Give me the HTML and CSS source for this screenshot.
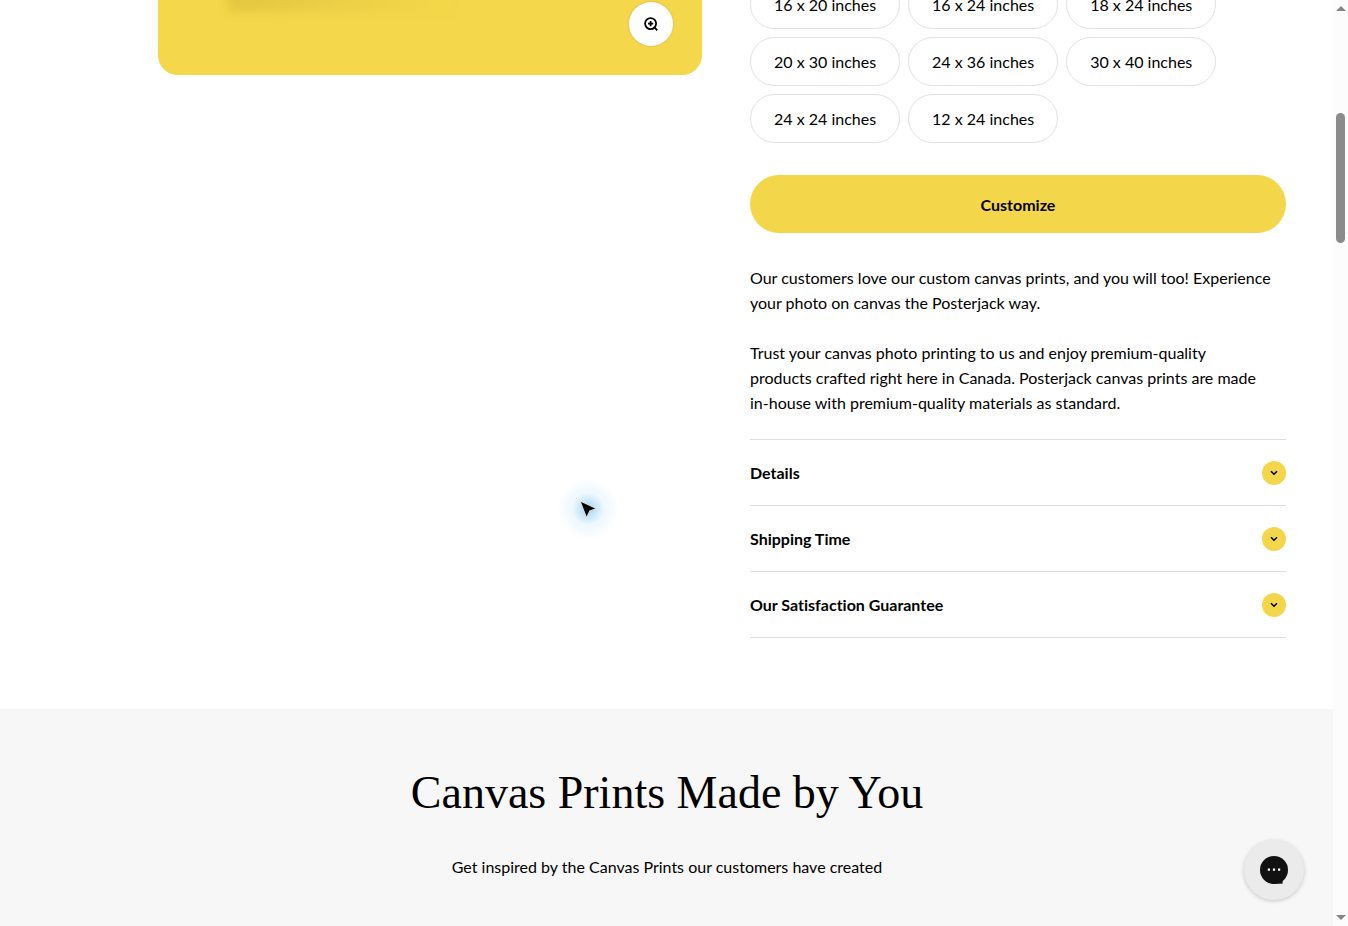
FILE: index.html
```html
<!DOCTYPE html>
<html lang="en">
<head>
    <meta charset="UTF-8">
    <meta name="viewport" content="width=device-width, initial-scale=1.0">
    <title>Canvas Prints</title>
    <link rel="stylesheet" href="styles.css">
</head>
<body>
    <main class="page">
        <section class="product">
            <div class="gallery">
                <div class="gallery-image">
                    <div class="canvas-shadow"></div>
                    <button type="button" class="zoom-button" aria-label="Zoom">
                        <svg width="14" height="14" viewBox="0 0 14 14" fill="none" stroke="#000" stroke-width="1.8">
                            <circle cx="6.6" cy="6.6" r="5.5"/>
                            <path d="M10.4 10.4L13.3 13.3M6.6 4v5.2M4 6.6h5.2"/>
                        </svg>
                    </button>
                </div>
            </div>

            <div class="product-info">
                <form id="sizeForm">
                    <div class="sizes">
                        <div class="size-row">
                            <label class="size"><input type="radio" name="size" value="16x20">16 x 20 inches</label>
                            <label class="size"><input type="radio" name="size" value="16x24">16 x 24 inches</label>
                            <label class="size"><input type="radio" name="size" value="18x24">18 x 24 inches</label>
                        </div>
                        <div class="size-row">
                            <label class="size"><input type="radio" name="size" value="20x30">20 x 30 inches</label>
                            <label class="size"><input type="radio" name="size" value="24x36">24 x 36 inches</label>
                            <label class="size"><input type="radio" name="size" value="30x40">30 x 40 inches</label>
                        </div>
                        <div class="size-row">
                            <label class="size"><input type="radio" name="size" value="24x24">24 x 24 inches</label>
                            <label class="size"><input type="radio" name="size" value="12x24">12 x 24 inches</label>
                        </div>
                    </div>
                    <button type="button" class="customize">Customize</button>
                </form>

                <div class="description">
                    <p>Our customers love our custom canvas prints, and you will too! Experience your photo on canvas the Posterjack way.</p>
                    <p>Trust your canvas photo printing to us and enjoy premium-quality<br>products crafted right here in Canada. Posterjack canvas prints are made <span class="nowrap">in-house</span> with premium-quality materials as standard.</p>
                </div>

                <div class="accordion">
                    <details>
                        <summary>Details
                            <span class="toggle"><svg width="8" height="6" viewBox="0 0 8 6"><path d="M1 1.2L4 4.2L7 1.2" fill="none" stroke="#000" stroke-width="1.6"/></svg></span>
                        </summary>
                    </details>
                    <details>
                        <summary>Shipping Time
                            <span class="toggle"><svg width="8" height="6" viewBox="0 0 8 6"><path d="M1 1.2L4 4.2L7 1.2" fill="none" stroke="#000" stroke-width="1.6"/></svg></span>
                        </summary>
                    </details>
                    <details>
                        <summary>Our Satisfaction Guarantee
                            <span class="toggle"><svg width="8" height="6" viewBox="0 0 8 6"><path d="M1 1.2L4 4.2L7 1.2" fill="none" stroke="#000" stroke-width="1.6"/></svg></span>
                        </summary>
                    </details>
                </div>
            </div>
        </section>

        <section class="made-by-you">
            <h2>Canvas Prints Made by You</h2>
            <p>Get inspired by the Canvas Prints our customers have created</p>
        </section>
    </main>

    <button type="button" class="chat" aria-label="Chat">
        <svg width="28" height="28" viewBox="0 0 28 28">
            <circle cx="14" cy="14" r="14" fill="#111"/>
            <path d="M12 22h10.6v5.7H12z" fill="#111"/>
            <path d="M7.8 12.6h2.2v2.2H7.8zM12.9 12.6h2.2v2.2h-2.2zM18 12.6h2.2v2.2H18z" fill="#fff"/>
        </svg>
    </button>

    <!-- Scrollbar -->
    <div class="scrollbar">
        <svg width="10" height="5" viewBox="0 0 10 5"><path d="M5 0L10 5H0z" fill="#858585"/></svg>
        <div class="scrollbar-thumb"></div>
        <svg class="scrollbar-down" width="10" height="5" viewBox="0 0 10 5"><path d="M0 0H10L5 5z" fill="#858585"/></svg>
    </div>

    <!-- Mouse pointer -->
    <div class="pointer">
        <svg width="18" height="18" viewBox="0 0 18 18">
            <path d="M2 2L16.2 8.4L10.4 10.6L7.6 16.6z" fill="#000" stroke="#d9dde0" stroke-width="2" stroke-linejoin="round" paint-order="stroke"/>
        </svg>
    </div>
</body>
</html>
```

FILE: styles.css
```css
* {
    box-sizing: border-box;
}

body {
    margin: 0;
    padding-right: 14px;
    font-family: Lato, "Liberation Sans", sans-serif;
    font-size: 16px;
    font-variant-ligatures: none;
    line-height: 25px;
    color: #000;
    background-color: #fff;
    overflow: hidden;
}

button, input {
    font: inherit;
    color: inherit;
}

button {
    border: none;
    cursor: pointer;
}

.nowrap {
    white-space: nowrap;
}

.product {
    display: grid;
    grid-template-columns: 1fr 536px;
    gap: 48px;
    align-items: start;
    margin-top: -20px;
    padding: 0 48px 71px;
}

.gallery {
    padding-left: 110px;
}

.gallery-image {
    position: relative;
    height: 95px;
    border-radius: 20px;
    background-color: #f4d74a;
    overflow: hidden;
}

.canvas-shadow {
    width: 220px;
    height: 32px;
    margin-left: 70px;
    background: linear-gradient(to right, #e3c740, #f4d74a);
    filter: blur(4px);
}

.zoom-button {
    position: absolute;
    right: 29px;
    bottom: 29px;
    display: flex;
    align-items: center;
    justify-content: center;
    width: 44px;
    height: 44px;
    padding: 0;
    border-radius: 50%;
    background-color: #fff;
    box-shadow: 0 0 1px 1px #e0c95a;
}

.sizes {
    display: flex;
    flex-direction: column;
    gap: 8px;
}

.size-row {
    display: flex;
    gap: 8px;
}

.size {
    padding: 11px 23px;
    border: 1px solid #e2e2e2;
    border-radius: 25px;
    white-space: nowrap;
    cursor: pointer;
}

.size input {
    position: absolute;
    opacity: 0;
}

.customize {
    width: 100%;
    height: 58px;
    margin-top: 32px;
    border-radius: 29px;
    font-weight: bold;
    background-color: #f4d64a;
}

.description {
    display: flex;
    flex-direction: column;
    gap: 25px;
    padding: 32px 0 24px;
}

.description p {
    margin: 0;
}

.accordion {
    border-bottom: 1px solid #dedede;
}

.accordion summary {
    display: flex;
    align-items: center;
    justify-content: space-between;
    height: 66px;
    border-top: 1px solid #dedede;
    font-weight: bold;
    cursor: pointer;
}

.toggle {
    display: flex;
    align-items: center;
    justify-content: center;
    width: 24px;
    height: 24px;
    border-radius: 50%;
    background-color: #f4d64a;
}

.made-by-you {
    padding: 52px 48px 47px;
    text-align: center;
    background-color: #f7f7f7;
}

.made-by-you h2 {
    margin: 0;
    font-family: "Liberation Serif", serif;
    font-size: 46px;
    font-weight: normal;
    line-height: 64px;
}

.made-by-you p {
    margin: 29px 0 0;
}

.chat {
    position: fixed;
    right: 44px;
    bottom: 26px;
    display: flex;
    align-items: center;
    justify-content: center;
    width: 60px;
    height: 60px;
    padding: 0;
    border-radius: 50%;
    background-color: #ebebeb;
    box-shadow: 0 1px 4px rgba(0, 0, 0, 0.2);
}

.scrollbar {
    position: fixed;
    top: 0;
    right: 0;
    bottom: 0;
    display: flex;
    flex-direction: column;
    align-items: center;
    width: 15px;
    padding: 6px 0;
    background-color: #fcfcfc;
}

.scrollbar-thumb {
    width: 9px;
    height: 130px;
    margin-top: 102px;
    border-radius: 5px;
    background-color: #8b8b8b;
}

.scrollbar-down {
    margin-top: auto;
}

.pointer {
    position: absolute;
    left: 548px;
    top: 469px;
    display: flex;
    align-items: center;
    justify-content: center;
    width: 80px;
    height: 80px;
    background: radial-gradient(circle, #9fd3f8 0, #c9e6fb 14%, #eef8fe 28%, rgba(255, 255, 255, 0) 55%);
}
```
